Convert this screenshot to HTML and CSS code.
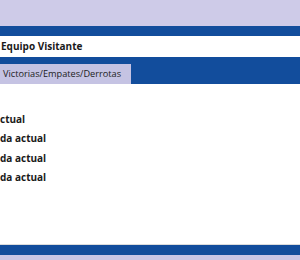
FILE: index.html
```html
<!DOCTYPE html>
<html lang="es">
<head>
  <meta charset="UTF-8" />
  <meta name="viewport" content="width=device-width, initial-scale=1.0" />
  <title>Equipo Visitante</title>
  <link rel="stylesheet" href="styles.css">
</head>
<body>

  <div class="top-band"></div>
  <div class="blue-strip"></div>

  <div class="team-name">Equipo Visitante</div>

  <nav class="tabs">
    <div class="tab active">Victorias/Empates/Derrotas</div>
  </nav>

  <div class="stats">
    <div class="stat-row">ctual</div>
    <div class="stat-row">da actual</div>
    <div class="stat-row">da actual</div>
    <div class="stat-row">da actual</div>
  </div>

  <footer>
    <div class="blue-strip"></div>
    <div class="bottom-band"></div>
  </footer>

</body>
</html>
```

FILE: styles.css
```css
* {
  margin: 0;
  padding: 0;
  box-sizing: border-box;
  font-family: 'Open Sans', 'Liberation Sans', sans-serif;
}

body {
  width: 300px;
  height: 260px;
  display: flex;
  flex-direction: column;
  background-color: #fff;
  color: #1a1a1a;
  overflow: hidden;
}

.top-band {
  height: 26px;
  background-color: #cecbe8;
}

.blue-strip {
  height: 10px;
  background-color: #124d9c;
}

.team-name {
  height: 21px;
  padding-left: 1px;
  font-size: 10px;
  font-weight: 700;
  line-height: 21px;
}

.tabs {
  height: 27px;
  padding-top: 7px;
  display: flex;
  background-color: #124d9c;
}

.tab {
  width: 131px;
  height: 20px;
  padding-left: 3px;
  font-size: 9.2px;
  line-height: 20px;
  color: #222;
  background-color: #c5c3e3;
  white-space: nowrap;
  overflow: hidden;
}

.stats {
  flex: 1;
  padding-top: 26px;
  display: flex;
  flex-direction: column;
}

.stat-row {
  font-size: 10px;
  font-weight: 700;
  line-height: 19.3px;
}

footer {
  border-top: 1px solid #dcdcdc;
}

.bottom-band {
  height: 5px;
  background-color: #c9c6e6;
}
```
